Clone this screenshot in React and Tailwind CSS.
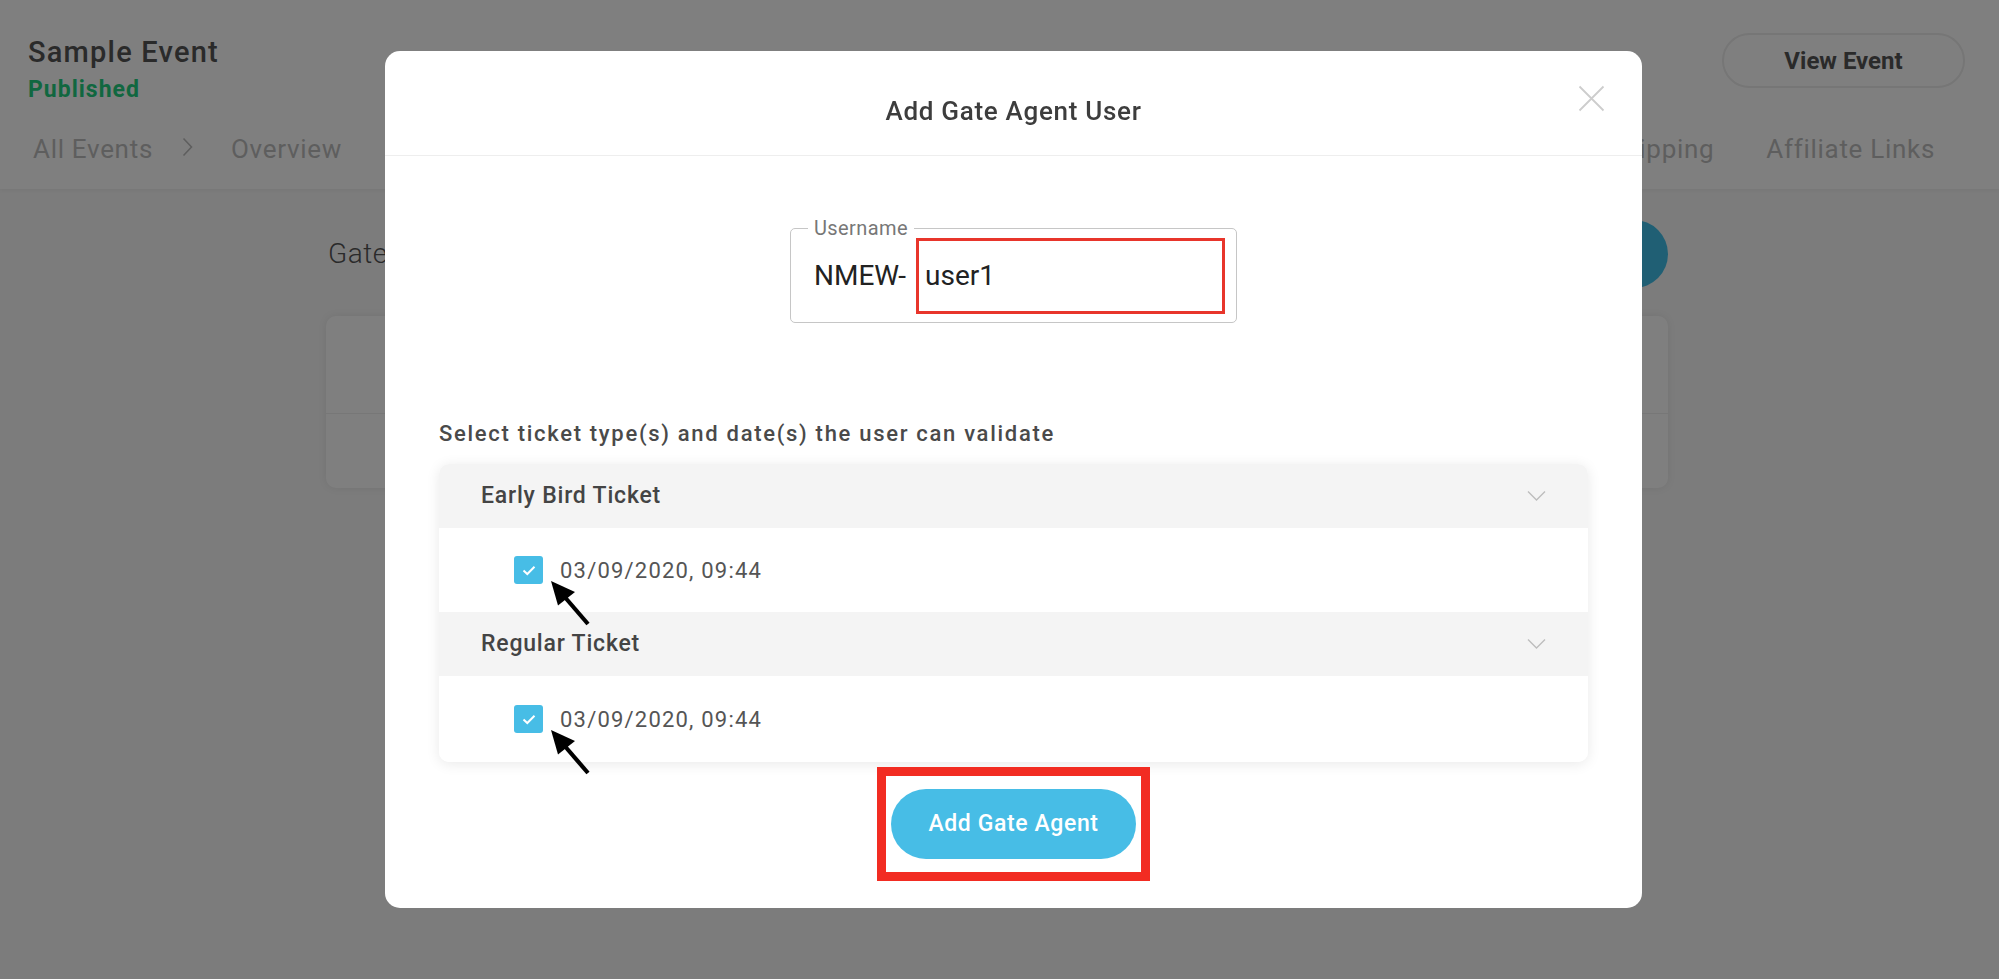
import React from 'react';

const font = { fontFamily: 'Roboto, "Noto Sans", sans-serif' };

// Small chevron used in accordion headers
function Chevron() {
  return (
    <svg width="19" height="12" viewBox="0 0 19 12" fill="none">
      <path d="M1 1.5 L9.5 10 L18 1.5" stroke="#bdbdbd" strokeWidth="1.4" />
    </svg>
  );
}

// Black annotation arrow pointing up-left
function Arrow() {
  return (
    <svg
      width="47"
      height="51"
      viewBox="0 0 47 51"
      className="absolute z-10 left-[34px] top-[22px]"
    >
      <line x1="15" y1="17" x2="40" y2="46" stroke="#000" strokeWidth="4.2" />
      <polygon points="3,3 27,14 10,27.5" fill="#000" />
    </svg>
  );
}

function CheckRow({ date, last }) {
  return (
    <div
      className={`${last ? 'h-[86px] rounded-b-[10px]' : 'h-[84px]'} bg-white pl-[75px] flex items-center gap-[17px]`}
    >
      <div className="relative">
        <div className="w-[29px] h-[28px] rounded-[3px] bg-[#47bde6] flex items-center justify-center">
          <svg width="14" height="11" viewBox="0 0 14 11" fill="none">
            <path d="M1.5 5.5 L5.3 9 L12.5 1.8" stroke="#fff" strokeWidth="2" />
          </svg>
        </div>
        <Arrow />
      </div>
      <span className="text-[22px] tracking-[1.2px] text-[#555]">{date}</span>
    </div>
  );
}

function TicketGroup({ name, date, first, last }) {
  return (
    <div>
      <div
        className={`h-[64px] bg-[#f4f4f4] px-[42px] flex items-center justify-between ${first ? 'rounded-t-[10px]' : ''}`}
      >
        <span className="text-[23px] font-medium tracking-[0.8px] text-[#444]">{name}</span>
        <Chevron />
      </div>
      <CheckRow date={date} last={last} />
    </div>
  );
}

export default function App() {
  const navRight = ['Shipping', 'Affiliate Links'];

  return (
    <div className="relative min-h-screen w-full flex flex-col bg-[#f8f8f8]" style={font}>
      {/* page header */}
      <div className="h-[189px] bg-white px-[28px] pt-[33px] shadow-[0_1px_4px_rgba(0,0,0,0.06)]">
        <div className="flex justify-between items-start">
          <div className="pt-[2px]">
            <div className="text-[29px] leading-[34px] font-medium tracking-[1.2px] text-[#555]">Sample Event</div>
            <div className="mt-[8px] text-[23px] leading-[26px] font-bold tracking-[1px] text-[#22cf80]">
              Published
            </div>
          </div>
          <button className="mr-[6px] w-[243px] h-[55px] rounded-full border-2 border-[#ececec] text-[24px] font-bold text-[#555]">
            View Event
          </button>
        </div>
        <div className="mt-[30px] flex items-center text-[26px] leading-[32px] tracking-[0.7px] text-[#bdbdbd]">
          <span className="pl-[5px]">All Events</span>
          <svg width="11" height="20" viewBox="0 0 11 20" fill="none" className="ml-[29px] -mt-[4px]">
            <path d="M1.5 1.5 L9.5 10 L1.5 18.5" stroke="#bdbdbd" strokeWidth="1.6" />
          </svg>
          <span className="ml-[38px]">Overview</span>
          <div className="ml-auto mr-[36px] flex gap-[52px]">
            {navRight.map((n) => (
              <span key={n}>{n}</span>
            ))}
          </div>
        </div>
      </div>

      {/* page body */}
      <div className="flex-1 pt-[31px] pl-[326px] pr-[331px]">
        <div className="h-[68px] flex items-center justify-between">
          <span className="pl-[2px] text-[28px] font-light tracking-[0.5px] text-[#555]">Gate Agents</span>
          <div className="w-[68px] h-[68px] rounded-full bg-[#41bfe8]" />
        </div>
        <div className="mt-[28px] h-[172px] rounded-[10px] bg-white shadow-[0_0_8px_rgba(0,0,0,0.08)]">
          <div className="h-[98px] border-b border-[#eeeeee]" />
        </div>
      </div>

      {/* modal overlay */}
      <div className="fixed inset-0 bg-black/50 pl-[385px] pt-[51px]">
        <div className="w-[1257px] h-[857px] rounded-[15px] bg-white">
          <div className="relative h-[105px] border-b border-[#eeeeee] pt-[16px] flex items-center justify-center">
            <span className="text-[26px] font-medium tracking-[0.7px] text-[#3d3d3d]">Add Gate Agent User</span>
            <svg
              width="27"
              height="27"
              viewBox="0 0 27 27"
              className="absolute right-[37px] top-[34px]"
            >
              <path d="M1.5 1.5 L25.5 25.5 M25.5 1.5 L1.5 25.5" stroke="#cdcdcd" strokeWidth="1.8" />
            </svg>
          </div>

          <div className="px-[54px] pt-[72px]">
            <div className="relative mx-auto w-[447px] h-[95px] rounded-[5px] border border-[#c6c6c6] flex items-center">
              <span className="absolute left-[17px] -top-[13px] bg-white px-[6px] text-[20px] leading-[24px] tracking-[0.4px] text-[#777]">
                Username
              </span>
              <span className="pl-[23px] w-[120px] text-[28px] text-[#222]">NMEW-</span>
              <div className="ml-[5px] w-[309px] h-[76px] border-[3px] border-[#e8352b] flex items-center pl-[6px] text-[28px] text-[#222]">
                user1
              </div>
            </div>

            <div className="mt-[98px] text-[22px] leading-[26px] font-medium tracking-[1.7px] text-[#4a4a4a]">
              Select ticket type(s) and date(s) the user can validate
            </div>

            <div className="mt-[17px] rounded-[10px] shadow-[0_2px_14px_rgba(0,0,0,0.09)]">
              <TicketGroup name="Early Bird Ticket" date="03/09/2020, 09:44" first />
              <TicketGroup name="Regular Ticket" date="03/09/2020, 09:44" last />
            </div>

            <div className="mt-[5px] mx-auto w-[273px] border-[9px] border-[#f22c22] px-[5px] py-[13px]">
              <button className="w-full h-[70px] rounded-full bg-[#47bde6] text-white text-[23px] font-medium tracking-[0.6px]">
                Add Gate Agent
              </button>
            </div>
          </div>
        </div>
      </div>
    </div>
  );
}
